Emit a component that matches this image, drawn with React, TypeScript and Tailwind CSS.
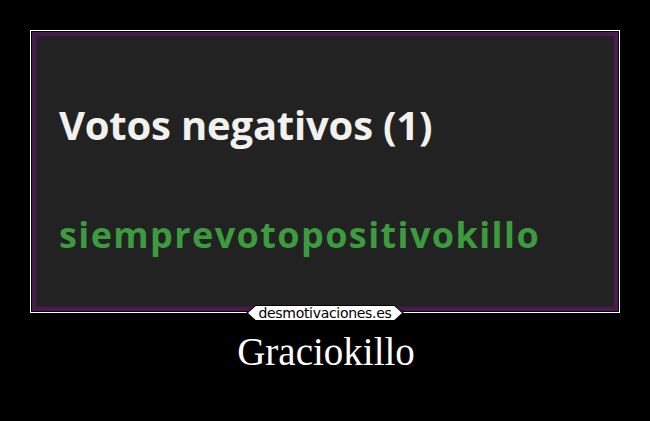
import React from "react";

function Logo() {
  return (
    <div className="absolute left-1/2 top-[305px] -translate-x-1/2 bg-black px-[2px] py-[1px] [clip-path:polygon(6%_0,94%_0,100%_50%,94%_100%,6%_100%,0_50%)]">
      <div className="flex h-[14px] w-[154px] items-center justify-center bg-white text-[14px] leading-none tracking-[-0.3px] text-black [clip-path:polygon(5%_0,95%_0,100%_50%,95%_100%,5%_100%,0_50%)] [font-family:'DejaVu_Sans','Liberation_Sans',sans-serif]">
        desmotivaciones.es
      </div>
    </div>
  );
}

export default function App() {
  return (
    <div className="relative h-[421px] w-[650px] bg-black">
      <div className="flex pl-[30px] pt-[30px]">
        <div className="h-[283px] w-[590px] border border-white p-[1px]">
          <div className="h-full w-full border-[4px] border-[#4a1b4e] bg-[#232222]">
            <div className="flex h-full flex-col border border-[#2e1e30] pl-[22px] pt-[68px] [font-family:'Open_Sans',sans-serif] font-bold">
              <p className="text-[40px] leading-none tracking-[-0.2px] text-[#f1f1ee]">Votos negativos (1)</p>
              <p className="mt-[72px] text-[36px] leading-none tracking-[1.4px] text-[#3c9b3e]">siemprevotopositivokillo</p>
            </div>
          </div>
        </div>
      </div>
      <Logo />
      <p className="mt-[19px] pl-[2px] text-center text-[39px] leading-none text-white [font-family:'Liberation_Serif',serif]">Graciokillo</p>
    </div>
  );
}
